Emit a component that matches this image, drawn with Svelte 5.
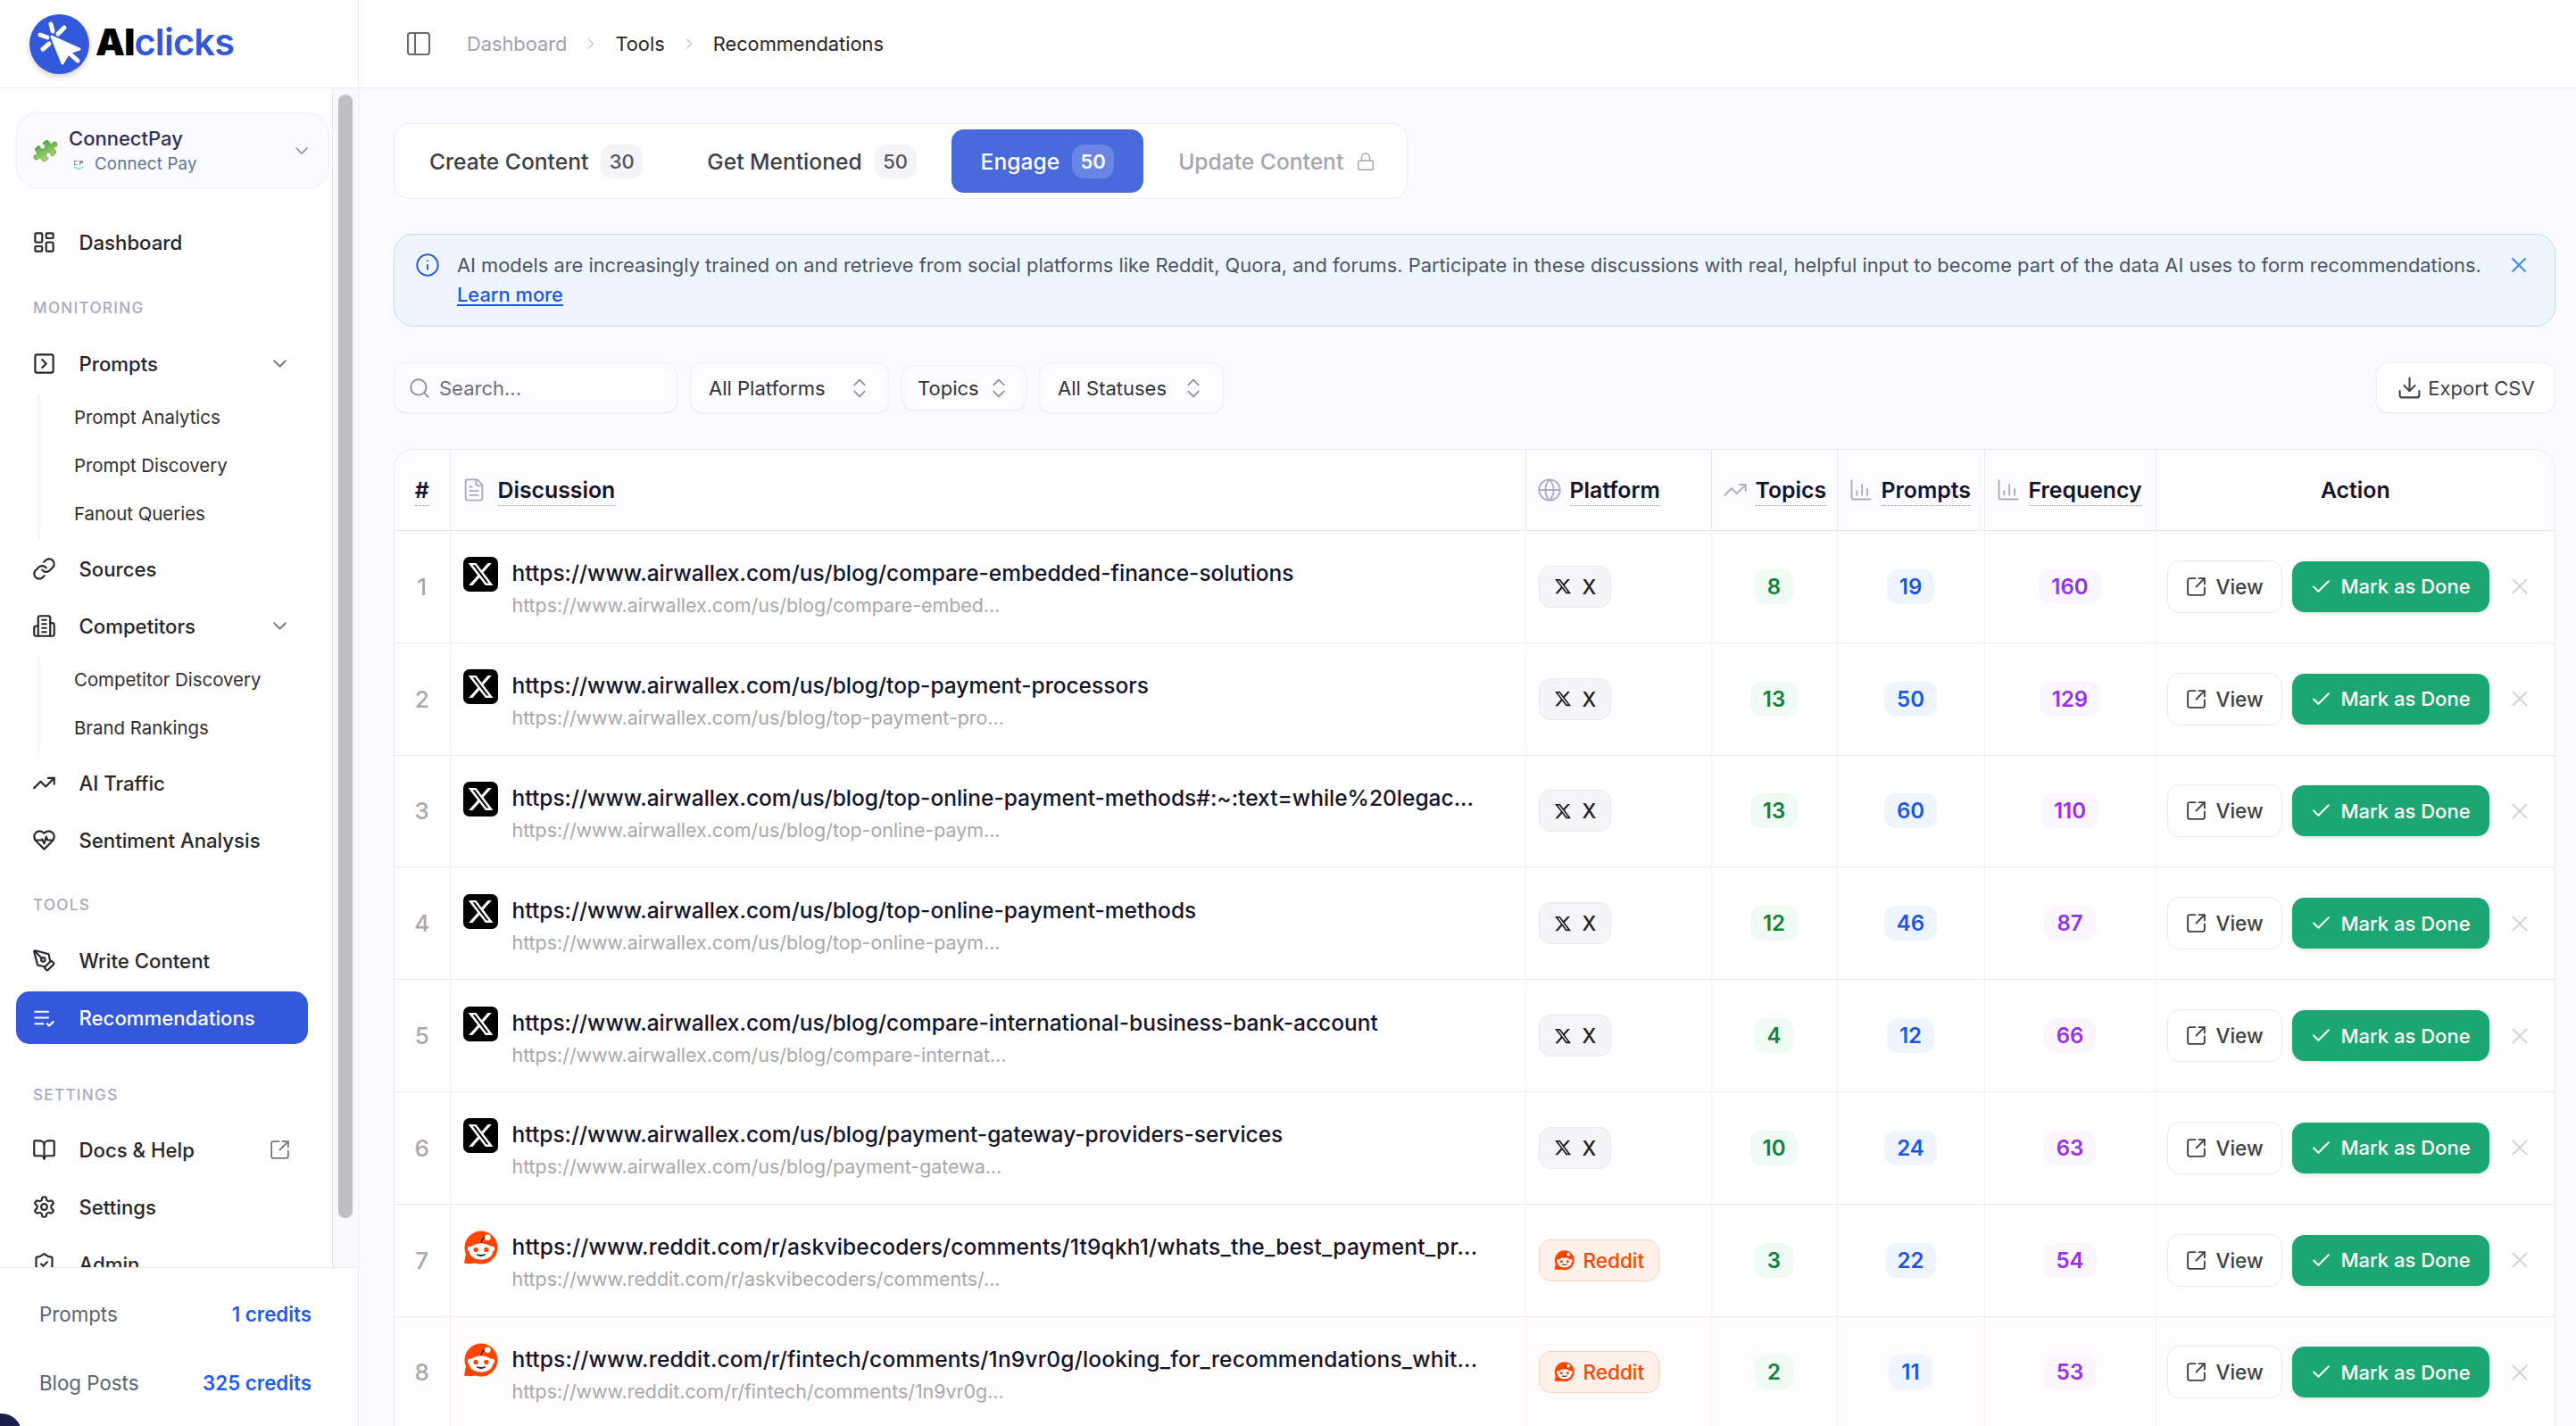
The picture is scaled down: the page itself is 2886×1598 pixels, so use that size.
<script>
  const paths = {
    dashboard: '<rect width="7" height="9" x="3" y="3" rx="1"/><rect width="7" height="5" x="14" y="3" rx="1"/><rect width="7" height="9" x="14" y="12" rx="1"/><rect width="7" height="5" x="3" y="16" rx="1"/>',
    prompts: '<rect width="18" height="18" x="3" y="3" rx="2"/><path d="m10 8 4 4-4 4"/>',
    link: '<path d="M10 13a5 5 0 0 0 7.54.54l3-3a5 5 0 0 0-7.07-7.07l-1.72 1.71"/><path d="M14 11a5 5 0 0 0-7.54-.54l-3 3a5 5 0 0 0 7.07 7.07l1.71-1.71"/>',
    building: '<path d="M6 22V4a2 2 0 0 1 2-2h8a2 2 0 0 1 2 2v18Z"/><path d="M6 12H4a2 2 0 0 0-2 2v6a2 2 0 0 0 2 2h2"/><path d="M18 9h2a2 2 0 0 1 2 2v9a2 2 0 0 1-2 2h-2"/><path d="M10 6h4"/><path d="M10 10h4"/><path d="M10 14h4"/><path d="M10 18h4"/>',
    trending: '<path d="M22 7 13.5 15.5 8.5 10.5 2 17"/><path d="M16 7h6v6"/>',
    heart: '<path d="M19 14c1.49-1.46 3-3.21 3-5.5A5.5 5.5 0 0 0 16.5 3c-1.76 0-3 .5-4.5 2-1.5-1.5-2.74-2-4.5-2A5.5 5.5 0 0 0 2 8.5c0 2.3 1.5 4.05 3 5.5l7 7Z"/><path d="M3.22 12H9.5l.5-1 2 4.5 2-7 1.5 3.5h5.27"/>',
    pen: '<path d="M15.707 21.293a1 1 0 0 1-1.414 0l-1.586-1.586a1 1 0 0 1 0-1.414l5.586-5.586a1 1 0 0 1 1.414 0l1.586 1.586a1 1 0 0 1 0 1.414z"/><path d="m18 13-1.375-6.874a1 1 0 0 0-.746-.776L3.235 2.028a1 1 0 0 0-1.207 1.207L5.35 15.879a1 1 0 0 0 .776.746L13 18"/><path d="m2.3 2.3 7.286 7.286"/><circle cx="11" cy="11" r="2"/>',
    listCheck: '<path d="M11 18H3"/><path d="m15 18 2 2 4-4"/><path d="M16 12H3"/><path d="M16 6H3"/>',
    book: '<path d="M12 7v14"/><path d="M3 18a1 1 0 0 1-1-1V4a1 1 0 0 1 1-1h5a4 4 0 0 1 4 4 4 4 0 0 1 4-4h5a1 1 0 0 1 1 1v13a1 1 0 0 1-1 1h-6a3 3 0 0 0-3 3 3 3 0 0 0-3-3z"/>',
    external: '<path d="M21 13v6a2 2 0 0 1-2 2H5a2 2 0 0 1-2-2V5a2 2 0 0 1 2-2h6"/><path d="m21 3-9 9"/><path d="M15 3h6v6"/>',
    settings: '<path d="M12.22 2h-.44a2 2 0 0 0-2 2v.18a2 2 0 0 1-1 1.73l-.43.25a2 2 0 0 1-2 0l-.15-.08a2 2 0 0 0-2.73.73l-.22.38a2 2 0 0 0 .73 2.73l.15.1a2 2 0 0 1 1 1.72v.51a2 2 0 0 1-1 1.74l-.15.09a2 2 0 0 0-.73 2.73l.22.38a2 2 0 0 0 2.73.73l.15-.08a2 2 0 0 1 2 0l.43.25a2 2 0 0 1 1 1.73V20a2 2 0 0 0 2 2h.44a2 2 0 0 0 2-2v-.18a2 2 0 0 1 1-1.73l.43-.25a2 2 0 0 1 2 0l.15.08a2 2 0 0 0 2.73-.73l.22-.39a2 2 0 0 0-.73-2.73l-.15-.08a2 2 0 0 1-1-1.74v-.5a2 2 0 0 1 1-1.74l.15-.09a2 2 0 0 0 .73-2.73l-.22-.38a2 2 0 0 0-2.73-.73l-.15.08a2 2 0 0 1-2 0l-.43-.25a2 2 0 0 1-1-1.73V4a2 2 0 0 0-2-2z"/><circle cx="12" cy="12" r="3"/>',
    shield: '<path d="M20 13c0 5-3.5 7.5-7.66 8.95a1 1 0 0 1-.67-.01C7.5 20.5 4 18 4 13V6a1 1 0 0 1 1-1c2 0 4.5-1.2 6.24-2.72a1.17 1.17 0 0 1 1.52 0C14.51 3.81 17 5 19 5a1 1 0 0 1 1 1z"/><path d="m9 12 2 2 4-4"/>',
    chevronDown: '<path d="m6 9 6 6 6-6"/>',
    chevronRight: '<path d="m9 18 6-6-6-6"/>',
    panel: '<rect width="18" height="18" x="3" y="3" rx="2"/><path d="M9 3v18"/>',
    info: '<circle cx="12" cy="12" r="10"/><path d="M12 16v-4"/><path d="M12 8h.01"/>',
    x: '<path d="M18 6 6 18"/><path d="m6 6 12 12"/>',
    check: '<path d="M20 6 9 17l-5-5"/>',
    search: '<path d="m21 21-4.34-4.34"/><circle cx="11" cy="11" r="8"/>',
    updown: '<path d="m7 15 5 5 5-5"/><path d="m7 9 5-5 5 5"/>',
    lock: '<rect width="18" height="11" x="3" y="11" rx="2"/><path d="M7 11V7a5 5 0 0 1 10 0v4"/>',
    download: '<path d="M12 15V3"/><path d="M21 15v4a2 2 0 0 1-2 2H5a2 2 0 0 1-2-2v-4"/><path d="m7 10 5 5 5-5"/>',
    file: '<path d="M15 2H6a2 2 0 0 0-2 2v16a2 2 0 0 0 2 2h12a2 2 0 0 0 2-2V7Z"/><path d="M14 2v4a2 2 0 0 0 2 2h4"/><path d="M10 9H8"/><path d="M16 13H8"/><path d="M16 17H8"/>',
    globe: '<circle cx="12" cy="12" r="10"/><path d="M12 2a14.5 14.5 0 0 0 0 20 14.5 14.5 0 0 0 0-20"/><path d="M2 12h20"/>',
    chart: '<path d="M3 3v16a2 2 0 0 0 2 2h16"/><path d="M8 17v-4"/><path d="M13 17V7"/><path d="M18 17v-6"/>'
  }

  const xLogo = 'M18.244 2.25h3.308l-7.227 8.26 8.502 11.24H16.17l-5.214-6.817L4.99 21.75H1.68l7.73-8.835L1.254 2.25H8.08l4.713 6.231zm-1.161 17.52h1.833L7.084 4.126H5.117z'

  const tabs = [
    { label: 'Create Content', count: 30 },
    { label: 'Get Mentioned', count: 50 },
    { label: 'Engage', count: 50, active: true },
    { label: 'Update Content', locked: true }
  ]

  const rows = [
    { title: 'https://www.airwallex.com/us/blog/compare-embedded-finance-solutions', sub: 'https://www.airwallex.com/us/blog/compare-embed...', p: 'x', topics: 8, prompts: 19, freq: 160 },
    { title: 'https://www.airwallex.com/us/blog/top-payment-processors', sub: 'https://www.airwallex.com/us/blog/top-payment-pro...', p: 'x', topics: 13, prompts: 50, freq: 129 },
    { title: 'https://www.airwallex.com/us/blog/top-online-payment-methods#:~:text=while%20legac...', sub: 'https://www.airwallex.com/us/blog/top-online-paym...', p: 'x', topics: 13, prompts: 60, freq: 110 },
    { title: 'https://www.airwallex.com/us/blog/top-online-payment-methods', sub: 'https://www.airwallex.com/us/blog/top-online-paym...', p: 'x', topics: 12, prompts: 46, freq: 87 },
    { title: 'https://www.airwallex.com/us/blog/compare-international-business-bank-account', sub: 'https://www.airwallex.com/us/blog/compare-internat...', p: 'x', topics: 4, prompts: 12, freq: 66 },
    { title: 'https://www.airwallex.com/us/blog/payment-gateway-providers-services', sub: 'https://www.airwallex.com/us/blog/payment-gatewa...', p: 'x', topics: 10, prompts: 24, freq: 63 },
    { title: 'https://www.reddit.com/r/askvibecoders/comments/1t9qkh1/whats_the_best_payment_pr...', sub: 'https://www.reddit.com/r/askvibecoders/comments/...', p: 'reddit', topics: 3, prompts: 22, freq: 54 },
    { title: 'https://www.reddit.com/r/fintech/comments/1n9vr0g/looking_for_recommendations_whit...', sub: 'https://www.reddit.com/r/fintech/comments/1n9vr0g...', p: 'reddit', topics: 2, prompts: 11, freq: 53 }
  ]
</script>

{#snippet icon(name, size = 22, width = 2)}
  <svg class="ic" width={size} height={size} viewBox="0 0 24 24" fill="none" stroke="currentColor" stroke-width={width} stroke-linecap="round" stroke-linejoin="round">{@html paths[name]}</svg>
{/snippet}

{#snippet redditMark(size)}
  <svg width={size} height={size} viewBox="0 0 40 40">
    <path d="M3 27 1 37.5q9 1.5 14-.5Z" fill="#ff4500" />
    <circle cx="20.5" cy="19.5" r="19" fill="#ff4500" />
    <circle cx="8" cy="21" r="3" fill="#fff" />
    <circle cx="33" cy="21" r="3" fill="#fff" />
    <ellipse cx="20.5" cy="24" rx="13.5" ry="9.5" fill="#fff" />
    <circle cx="14.5" cy="22" r="2.7" fill="#ff4500" />
    <circle cx="26.5" cy="22" r="2.7" fill="#ff4500" />
    <path d="M15.5 27.5q5 3.5 10 0q-5 1.500-10 0Z" fill="#222" stroke="#222" />
    <path d="M20.500 14.500q.5-6 5.500-7" fill="none" stroke="#222" stroke-width="1.200" />
    <circle cx="28" cy="8" r="3.400" fill="#fff" />
  </svg>
{/snippet}

{#snippet navItem(name, label, active = false)}
  <div class="nav-item" class:active>
    {@render icon(name, 27, 1.9)}
    <span>{label}</span>
  </div>
{/snippet}

<div class="app">
  <aside class="sidebar">
    <div class="brand">
      <svg class="logo" width="67" height="67" viewBox="0 0 67 67">
        <circle cx="33.500" cy="33.500" r="33.500" fill="#3358d9" />
        <g stroke="#fff" stroke-width="5" stroke-linecap="round" stroke-linejoin="round">
          <path d="M24 11l2 8M39 15l-7 7M12 23l8 3M15 39l7-6" fill="none" />
          <path d="M25 25l31 14-12 4-7 12Z" fill="#fff" stroke-width="3" />
          <path d="M44 43l10 9" fill="none" />
        </g>
      </svg>
      <span class="brand-name"><b>AI</b><em>clicks</em></span>
    </div>

    <div class="side-scroll">
      <nav class="nav">
        <div class="org">
          <svg width="28" height="28" viewBox="0 0 24 24" class="puzzle">
            <defs>
              <linearGradient id="pz" x1="0" y1="0" x2="0.8" y2="1">
                <stop offset="0" stop-color="#2f9a48" />
                <stop offset="1" stop-color="#c4de6a" />
              </linearGradient>
            </defs>
            <path fill="url(#pz)" stroke="#4c9a3f" stroke-width="0.6" d="M15.39 4.39a1 1 0 0 0 1.68-.474 2.5 2.5 0 1 1 3.014 3.015 1 1 0 0 0-.474 1.68l1.683 1.682a2.414 2.414 0 0 1 0 3.414L19.61 15.39a1 1 0 0 1-1.68-.474 2.5 2.5 0 1 0-3.014 3.015 1 1 0 0 1 .474 1.68l-1.683 1.682a2.414 2.414 0 0 1-3.414 0L8.61 19.61a1 1 0 0 0-1.68.474 2.5 2.5 0 1 1-3.014-3.015 1 1 0 0 0 .474-1.68l-1.683-1.682a2.414 2.414 0 0 1 0-3.414L4.39 8.61a1 1 0 0 1 1.68.474 2.5 2.5 0 1 0 3.014-3.015 1 1 0 0 1-.474-1.68l1.683-1.682a2.414 2.414 0 0 1 3.414 0z" />
          </svg>
          <div class="org-text">
            <div class="org-name">ConnectPay</div>
            <div class="org-sub">
              <svg width="14" height="14" viewBox="0 0 14 14">
                <path d="M2 10q5 4 10 0" fill="none" stroke="#7fd6c2" stroke-width="1.500" />
                <path d="M2 3h4v1H3v3h3v1H2ZM8 3h4v3H9v2H8Z" fill="#8a8f99" />
              </svg>
              Connect Pay
            </div>
          </div>
          <span class="org-chev">{@render icon('chevronDown', 24, 1.6)}</span>
        </div>

        <div class="first">{@render navItem('dashboard', 'Dashboard')}</div>

        <div class="section">MONITORING</div>
        <div class="nav-item">
          {@render icon('prompts', 27, 1.9)}
          <span>Prompts</span>
          <span class="chev">{@render icon('chevronDown', 25, 1.8)}</span>
        </div>
        <div class="sub">
          <div>Prompt Analytics</div>
          <div>Prompt Discovery</div>
          <div>Fanout Queries</div>
        </div>
        {@render navItem('link', 'Sources')}
        <div class="nav-item">
          {@render icon('building', 27, 1.9)}
          <span>Competitors</span>
          <span class="chev">{@render icon('chevronDown', 25, 1.8)}</span>
        </div>
        <div class="sub">
          <div>Competitor Discovery</div>
          <div>Brand Rankings</div>
        </div>
        {@render navItem('trending', 'AI Traffic')}
        {@render navItem('heart', 'Sentiment Analysis')}

        <div class="section tools">TOOLS</div>
        {@render navItem('pen', 'Write Content')}
        {@render navItem('listCheck', 'Recommendations', true)}

        <div class="section wide">SETTINGS</div>
        <div class="nav-item">
          {@render icon('book', 27, 1.9)}
          <span>Docs &amp; Help</span>
          <span class="ext">{@render icon('external', 25, 1.7)}</span>
        </div>
        {@render navItem('settings', 'Settings')}
        {@render navItem('shield', 'Admin')}
      </nav>
      <div class="track"><div class="thumb"></div></div>
    </div>

    <div class="credits">
      <div class="credit"><span>Prompts</span><strong>1 credits</strong></div>
      <div class="credit"><span>Blog Posts</span><strong>325 credits</strong></div>
    </div>
  </aside>

  <div class="main">
    <header class="topbar">
      <span class="panel-btn">{@render icon('panel', 32, 1.6)}</span>
      <span class="crumb muted">Dashboard</span>
      <span class="sep">{@render icon('chevronRight', 20, 1.4)}</span>
      <span class="crumb">Tools</span>
      <span class="sep">{@render icon('chevronRight', 20, 1.4)}</span>
      <span class="crumb">Recommendations</span>
    </header>

    <main class="content">
      <div class="tabs">
        {#each tabs as t}
          <div class="tab" class:active={t.active} class:locked={t.locked}>
            <span class="tab-label">{t.label}</span>
            {#if t.count}<span class="count">{t.count}</span>{/if}
            {#if t.locked}{@render icon('lock', 22, 1.6)}{/if}
          </div>
        {/each}
      </div>

      <div class="banner">
        <span class="info">{@render icon('info', 28, 1.7)}</span>
        <div class="banner-text">
          <p>AI models are increasingly trained on and retrieve from social platforms like Reddit, Quora, and forums. Participate in these discussions with real, helpful input to become part of the data AI uses to form recommendations.</p>
          <a href="#learn">Learn more</a>
        </div>
        <span class="banner-x">{@render icon('x', 28, 1.7)}</span>
      </div>

      <div class="filters">
        <div class="search">{@render icon('search', 26, 1.7)}<span>Search...</span></div>
        <div class="select platforms"><span>All Platforms</span>{@render icon('updown', 28, 1.5)}</div>
        <div class="select topics"><span>Topics</span>{@render icon('updown', 28, 1.5)}</div>
        <div class="select statuses"><span>All Statuses</span>{@render icon('updown', 28, 1.5)}</div>
        <div class="export">{@render icon('download', 29, 1.7)}<span>Export CSV</span></div>
      </div>

      <div class="table-wrap">
        <table>
          <colgroup>
            <col style="width:62px" /><col style="width:1205px" /><col style="width:208px" /><col style="width:141px" /><col style="width:165px" /><col style="width:192px" /><col />
          </colgroup>
          <thead>
            <tr>
              <th class="num"><u>#</u></th>
              <th><div class="th disc-h"><span class="thi">{@render icon('file', 28, 1.6)}</span><u>Discussion</u></div></th>
              <th><div class="th"><span class="thi">{@render icon('globe', 28, 1.6)}</span><u>Platform</u></div></th>
              <th><div class="th"><span class="thi">{@render icon('trending', 28, 1.6)}</span><u>Topics</u></div></th>
              <th><div class="th"><span class="thi">{@render icon('chart', 28, 1.6)}</span><u>Prompts</u></div></th>
              <th><div class="th"><span class="thi">{@render icon('chart', 28, 1.6)}</span><u>Frequency</u></div></th>
              <th class="act-h">Action</th>
            </tr>
          </thead>
          <tbody>
            {#each rows as r, i}
              <tr>
                <td class="idx">{i + 1}</td>
                <td>
                  <div class="disc">
                    {#if r.p === 'x'}
                      <span class="x-mark"><svg width="31" height="31" viewBox="0 0 24 24"><path d={xLogo} fill="#fff" /></svg></span>
                    {:else}
                      <span class="r-mark">{@render redditMark(39)}</span>
                    {/if}
                    <div class="disc-text">
                      <div class="title" class:spread={r.p === 'reddit'}>{r.title}</div>
                      <div class="url">{r.sub}</div>
                    </div>
                  </div>
                </td>
                <td>
                  {#if r.p === 'x'}
                    <span class="pill"><svg width="20" height="20" viewBox="0 0 24 24"><path d={xLogo} fill="#18181b" /></svg>X</span>
                  {:else}
                    <span class="pill reddit">{@render redditMark(23)}Reddit</span>
                  {/if}
                </td>
                <td class="c"><span class="badge green">{r.topics}</span></td>
                <td class="c"><span class="badge blue">{r.prompts}</span></td>
                <td class="c"><span class="badge purple">{r.freq}</span></td>
                <td>
                  <div class="actions">
                    <span class="view">{@render icon('external', 25, 1.8)}View</span>
                    <span class="done">{@render icon('check', 25, 1.9)}Mark as Done</span>
                    <span class="dismiss">{@render icon('x', 30, 1.5)}</span>
                  </div>
                </td>
              </tr>
            {/each}
          </tbody>
        </table>
      </div>
    </main>
  </div>

  <div class="corner"></div>
</div>

<style>
  :global(body) { margin: 0; background: #fbfaff; }
  .app {
    width: 2886px; height: 1598px; overflow: hidden; display: flex; position: relative;
    font-family: Inter, "Noto Sans", sans-serif; color: #18181b;
  }
  .ic { flex: none; display: block; }

  .sidebar {
    width: 402px; flex: none; height: 100%; background: #fff;
    border-right: 1px solid #ececf2; box-sizing: border-box;
    display: flex; flex-direction: column;
  }
  .brand {
    height: 99px; flex: none; box-sizing: border-box; border-bottom: 1px solid #e9e9ef;
    display: flex; align-items: center; padding: 0 0 13px 33px; gap: 7px;
  }
  .logo { filter: drop-shadow(0 3px 3px rgba(0,0,0,0.18)); margin-top: 13px; }
  .brand-name { font-size: 41.500px; font-weight: 700; letter-spacing: -0.8px; line-height: 1; margin-top: 10px; }
  .brand-name b { color: #000; }
  .brand-name em { font-style: normal; color: #3358d9; font-weight: 600; }

  .side-scroll { flex: 1; min-height: 0; display: flex; overflow: hidden; }
  .nav { width: 372px; flex: none; box-sizing: border-box; padding: 27px 0 0 18px; overflow: hidden; display: flex; flex-direction: column; gap: 5px; }
  .track { flex: 1; background: #f9f8fd; border-left: 1px solid #e9e9ef; padding: 7px 6px 0 6px; }
  .thumb { width: 16px; height: 1259px; background: #c0bec3; border-radius: 8px; }

  .org {
    width: 351px; height: 85px; flex: none; box-sizing: border-box;
    background: #fafaff; border: 1px solid #eeeef8; border-radius: 24px;
    display: flex; align-items: center; padding-left: 18px;
  }
  .puzzle { margin-right: 12px; transform: rotate(10deg); }
  .org-text { flex: 1; }
  .org-name { font-size: 22px; font-weight: 500; color: #2f2f55; line-height: 30px; }
  .org-sub { font-size: 18.700px; color: #64748b; line-height: 28px; display: flex; align-items: center; gap: 11px; padding-left: 4px; letter-spacing: 0.2px; }
  .org-chev { color: #7c8db0; margin-right: 18px; }

  .first { margin-top: 26px; }
  .nav-item {
    height: 59px; flex: none; width: 327px; box-sizing: border-box; border-radius: 15px;
    display: flex; align-items: center; padding-left: 18px; gap: 25.500px;
    font-size: 22.200px; font-weight: 500; color: #26262b;
  }
  .nav-item.active { background: #3358d9; color: #fff; }
  .chev { margin-left: auto; margin-right: 19px; color: #6a6a8a; }
  .ext { margin-left: auto; margin-right: 19px; color: #75757f; }
  .section {
    height: 26px; flex: none; line-height: 26px; margin: 26px 0 15px 19px;
    font-size: 17.100px; font-weight: 500; letter-spacing: 1.300px; color: #a9a9c2;
  }
  .section.tools { margin: 25px 0 14.500px 19px; }
  .section.wide { margin: 39px 0 14px 19px; }
  .sub {
    margin: -0.500px 0 -0.500px 25px; border-left: 1px solid #e8e8ee; padding-left: 39px;
    font-size: 20.400px; color: #2f2f34;
  }
  .sub div { height: 54px; line-height: 52px; }

  .credits {
    height: 178px; flex: none; box-sizing: border-box; border-top: 1px solid #e9e9ef;
    padding: 13px 52px 0 44px; background: #fff;
  }
  .credit { height: 77px; display: flex; align-items: center; justify-content: space-between; font-size: 22.300px; color: #5b6475; }
  .credit strong { color: #1f5eea; font-weight: 600; }

  .main { flex: 1; min-width: 0; display: flex; flex-direction: column; }
  .topbar {
    height: 99px; flex: none; box-sizing: border-box; background: #fff; border-bottom: 1px solid #e9e9ef;
    display: flex; align-items: center; padding: 0 0 1px 51px; font-size: 21.800px; color: #26262b;
  }
  .panel-btn { color: #6a6a74; margin-right: 38px; }
  .crumb.muted { color: #a0a0b4; }
  .sep { color: #c6c6d2; margin: 0 17px; }

  .content { padding: 39px 23px 0 39px; }
  .tabs {
    width: 1136px; height: 85px; box-sizing: border-box; background: #fff;
    border: 1px solid #ebebf0; border-radius: 18px; padding: 6px;
    display: flex; gap: 6px;
  }
  .tab {
    height: 71px; box-sizing: border-box; padding: 0 33px; border-radius: 14px; flex: none;
    display: flex; align-items: center; gap: 14px; font-size: 24.600px; font-weight: 500; color: #3f3f46;
  }
  .tab-label { white-space: nowrap; }
  .tab.active { background: #4769dc; color: #fff; }
  .tab.locked { color: #a5a5ad; }
  .count {
    height: 38px; min-width: 47px; box-sizing: border-box; border-radius: 13px;
    background: #f4f4f6; color: #55555e; font-size: 22px; font-weight: 500;
    display: flex; align-items: center; justify-content: center;
  }
  .active .count { background: #6a86e4; color: #fff; font-weight: 600; }

  .banner {
    margin-top: 39px; height: 104px; box-sizing: border-box;
    background: #eff5ff; border: 1px solid #bcdafc; border-radius: 22px;
    display: flex; padding: 18px 0 0 23px;
  }
  .info { color: #2a5bd8; margin-right: 19px; margin-top: 2px; }
  .banner-text { flex: 1; font-size: 21.850px; color: #4b5563; line-height: 33px; }
  .banner-text p { margin: 0; white-space: nowrap; }
  .banner-text a { color: #1d55e8; font-weight: 500; text-decoration: underline; text-underline-offset: 3px; }
  .banner-x { color: #3b8bf0; margin-right: 26px; margin-top: 2px; }

  .filters { margin-top: 40px; height: 57px; display: flex; align-items: center; gap: 14px; }
  .search, .select, .export {
    box-sizing: border-box; height: 57px; display: flex; align-items: center;
    border: 1px solid #efeff4; border-radius: 14px; font-size: 22px;
    box-shadow: 0 1px 2px rgba(20,20,40,0.05);
  }
  .search { width: 318px; padding-left: 15px; gap: 9px; color: #6f6f7a; background: #fcfbff; }
  .search :global(svg) { color: #8d8d96; }
  .select { background: #fcfbff; color: #33333a; justify-content: space-between; padding: 0 18px 0 20px; }
  .select :global(svg) { color: #8d8d96; }
  .platforms { width: 223px; }
  .topics { width: 140px; height: 51px; padding: 0 16px 0 17px; }
  .statuses { width: 207px; padding-right: 19px; }
  .export { margin-left: auto; width: 201px; background: #fff; justify-content: center; gap: 6px; color: #3f3f46; }

  .table-wrap {
    margin-top: 40px; width: 2422px; box-sizing: border-box; background: #fff;
    border: 1px solid #e9e9f0; border-radius: 24px 24px 0 0; overflow: hidden;
  }
  table { width: 100%; border-collapse: collapse; table-layout: fixed; }
  th {
    height: 90px; padding: 0; background: #fcfbff; border-bottom: 1px solid #e7e7ef; border-left: 1px solid #e7e7ef;
    text-align: left; font-size: 24.800px; font-weight: 600; color: #14142a;
  }
  th:first-child, td:first-child { border-left: none; }
  th u { text-decoration: none; border-bottom: 1px dotted #9a9aa0; line-height: 34px; display: inline-block; }
  .num { text-align: center; }
  .th { display: flex; align-items: center; gap: 9px; padding-left: 12px; }
  .disc-h { gap: 13px; }
  .thi { color: #ababc0; }
  .act-h { text-align: center; }
  td {
    height: 124.800px; padding: 0; border-bottom: 1px solid #e9e9f0; border-left: 1px solid #f2f2f6; background: #fff;
  }
  tr:last-child td { background: #fffcfe; }
  .idx { text-align: center; font-size: 26px; font-weight: 500; color: #a8a8ad; }
  .disc { display: flex; align-items: flex-start; padding-left: 14px; gap: 16px; height: 66px; }
  .x-mark {
    width: 39px; height: 39px; flex: none; background: #000; border-radius: 7px;
    display: flex; align-items: center; justify-content: center;
  }
  .r-mark { width: 39px; height: 39px; flex: none; }
  .disc-text { min-width: 0; }
  .title { font-size: 24.500px; font-weight: 500; color: #14142a; line-height: 36px; white-space: nowrap; }
  .title.spread { letter-spacing: 0.17px; }
  .url { font-size: 21.400px; color: #a8a8ad; line-height: 37px; white-space: nowrap; }
  .pill {
    margin-left: 14px; height: 47px; box-sizing: border-box; padding: 0 16px; border-radius: 13px;
    display: inline-flex; align-items: center; gap: 12px; font-size: 22.500px; font-weight: 500;
    background: #f5f5f7; border: 1px solid #e9e9ed; color: #222; vertical-align: middle;
  }
  .pill.reddit { gap: 10px; background: #fff0ea; border-color: #ffd2c2; color: #ff4500; }
  .c { text-align: center; }
  .badge {
    display: inline-block; height: 39px; line-height: 39px; padding: 0 14px; border-radius: 13px;
    font-size: 24px; font-weight: 600;
  }
  .green { background: #f0faf4; color: #15803d; }
  .blue { background: #eff5ff; color: #1d55e8; }
  .purple { background: #faf5ff; color: #9333ea; }
  .actions { display: flex; align-items: center; padding-left: 12px; }
  .view {
    width: 129px; height: 59px; box-sizing: border-box; border: 1px solid #e9e9ed; border-radius: 14px;
    display: flex; align-items: center; justify-content: center; gap: 9px; font-size: 22.500px; font-weight: 500; color: #3f3f46; background: #fff;
  }
  .done {
    margin-left: 11px; width: 221px; height: 57px; box-sizing: border-box; border-radius: 14px;
    display: flex; align-items: center; justify-content: center; gap: 9px; font-size: 22px; font-weight: 500; color: #fff;
    background: #1ba674; box-shadow: 0 2px 4px rgba(20,80,60,0.15);
  }
  .dismiss { color: #d4d4d8; margin-left: 19px; }

  .corner { position: absolute; left: -20px; bottom: -30px; width: 44px; height: 44px; border-radius: 50%; background: #1a1f4b; }
</style>
